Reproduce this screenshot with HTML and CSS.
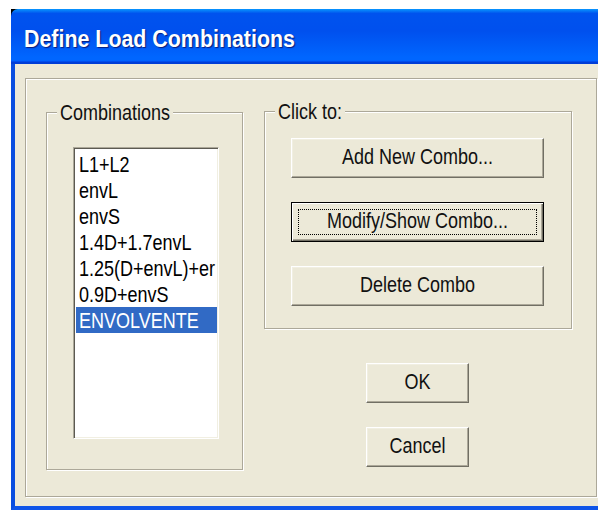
FILE: index.html
```html
<!DOCTYPE html>
<html lang="en">
<head>
<meta charset="utf-8">
<title>Define Load Combinations</title>
<link rel="stylesheet" href="styles.css">
</head>
<body>
<div class="window">
  <div class="titlebar"><span class="title">Define Load Combinations</span></div>
  <div class="client">
    <div class="panel">
      <section class="group group-combos">
        <div class="group-label"><span class="t">Combinations</span></div>
        <ul class="listbox">
          <li class="item"><span class="t">L1+L2</span></li>
          <li class="item"><span class="t">envL</span></li>
          <li class="item"><span class="t">envS</span></li>
          <li class="item"><span class="t">1.4D+1.7envL</span></li>
          <li class="item"><span class="t">1.25(D+envL)+er</span></li>
          <li class="item"><span class="t">0.9D+envS</span></li>
          <li class="item selected"><span class="t">ENVOLVENTE</span></li>
        </ul>
      </section>
      <div class="actions">
        <section class="group group-click">
          <div class="group-label"><span class="t">Click to:</span></div>
          <div class="button-stack">
            <button class="btn btn-wide" type="button"><span class="t">Add New Combo...</span></button>
            <button class="btn btn-wide btn-default" type="button"><span class="t">Modify/Show Combo...</span></button>
            <button class="btn btn-wide" type="button"><span class="t">Delete Combo</span></button>
          </div>
        </section>
        <div class="button-stack confirm">
          <button class="btn btn-small" type="button"><span class="t">OK</span></button>
          <button class="btn btn-small" type="button"><span class="t">Cancel</span></button>
        </div>
      </div>
    </div>
  </div>
</div>
</body>
</html>
```

FILE: styles.css
```css
html,
body {
  overflow: hidden;
}

body {
  margin: 0;
  background: #fff;
  font-family: "Liberation Sans", Arial, sans-serif;
  font-size: 18px;
  color: #111;
}

/* glyphs are drawn tall and narrow, like the dialog font */
.t {
  display: inline-block;
  transform: scaleY(1.27);
}

/* window shell: black shows only through the rounded title corner */
.window {
  margin: 9px 0 0 11px;
  width: 600px;
  background: #000;
}

.titlebar {
  height: 55px;
  box-sizing: border-box;
  padding: 6px 0 0 13px;
  line-height: 49px;
  border-radius: 7px 7px 0 0;
  background: linear-gradient(180deg, #0997ff, #0053ee 8%, #0050ee 40%, #0066ff 88%, #0066ff 93%, #005bff 95%, #003dd7 96%, #003dd7);
}

.title {
  display: inline-block;
  font-weight: 700;
  font-size: 21.4px;
  color: #fff;
  text-shadow: 1px 1px 1px #0a1c7a;
  transform: scaleY(1.15);
}

.client {
  height: 446px;
  box-sizing: border-box;
  padding: 14px 0 0 10px;
  background: #ece9d8;
  border-left: 4px solid #0a4ee0;
  border-bottom: 4px solid #0f55e8;
}

/* etched outer frame */
.panel {
  width: 572px;
  height: 419px;
  box-sizing: border-box;
  display: flex;
  align-items: flex-start;
  padding-left: 20px;
  border: 1px solid #aca899;
  box-shadow: inset 1px 1px #fff, 1px 1px #fff;
}

/* group boxes */
.group {
  box-sizing: border-box;
  border: 1px solid #aca899;
  box-shadow: inset 1px 1px #fff, 1px 1px #fff;
}

.group-combos {
  width: 197px;
  height: 358px;
  margin-top: 33px;
}

.actions {
  display: flex;
  flex-direction: column;
  margin: 32px 0 0 21px;
}

.group-click {
  width: 308px;
  height: 218px;
}

.group-label {
  width: fit-content;
  height: 20px;
  line-height: 20px;
  margin: -11px 0 0 10px;
  padding: 0 3px;
  background: #ece9d8;
}

/* list of combinations */
.listbox {
  list-style: none;
  width: 146px;
  height: 292px;
  box-sizing: border-box;
  margin: 25px 0 0 26px;
  padding: 3px 0 0;
  overflow: hidden;
  background: #fff;
  border: 1px solid;
  border-color: #aca899 #fff #fff #aca899;
  box-shadow: inset 1px 1px #5c5a52, inset -1px -1px #f1efe2;
}

.item {
  height: 26px;
  line-height: 26px;
  margin: 0 1px 0 2px;
  padding-left: 3px;
  white-space: nowrap;
  color: #000;
}

.item.selected {
  background: #316ac5;
  color: #fff;
}

/* push buttons */
.button-stack {
  display: flex;
  flex-direction: column;
  gap: 24px;
}

.group-click .button-stack {
  margin: 17px 0 0 26px;
}

.confirm {
  margin: 34px 0 0 102px;
}

.btn {
  font: inherit;
  color: #111;
  height: 40px;
  box-sizing: border-box;
  padding: 0 0 2px;
  display: flex;
  align-items: center;
  justify-content: center;
  background: #ece9d8;
  border: 1px solid;
  border-color: #fff #716f64 #716f64 #fff;
  box-shadow: inset -1px -1px #aca899, inset 1px 1px #f1efe2;
}

.btn-wide {
  width: 253px;
}

.btn-small {
  width: 103px;
}

.btn-default {
  border-color: #000;
  box-shadow: inset 1px 1px #fff, inset -1px -1px #716f64, inset -2px -2px #aca899;
  outline: 1px dotted #000;
  outline-offset: -8px;
}
```
